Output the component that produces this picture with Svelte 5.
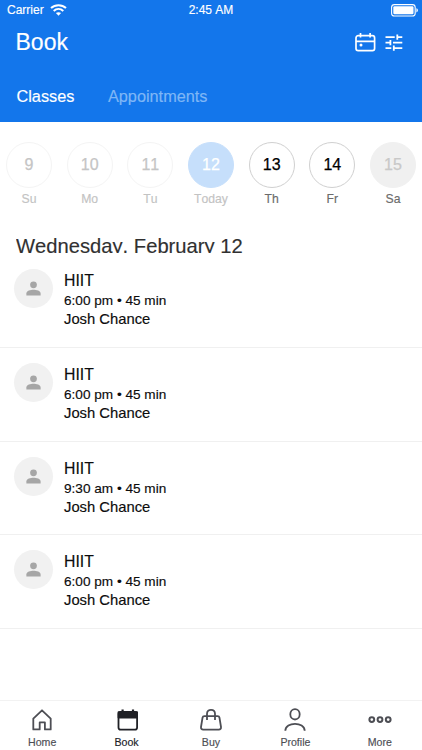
<script>
  const days = [
    { n: 9, label: 'Su', kind: 'past' },
    { n: 10, label: 'Mo', kind: 'past' },
    { n: 11, label: 'Tu', kind: 'past' },
    { n: 12, label: 'Today', kind: 'today' },
    { n: 13, label: 'Th', kind: 'open' },
    { n: 14, label: 'Fr', kind: 'open' },
    { n: 15, label: 'Sa', kind: 'closed' }
  ];
  const classes = [
    { name: 'HIIT', time: '6:00 pm • 45 min', coach: 'Josh Chance' },
    { name: 'HIIT', time: '6:00 pm • 45 min', coach: 'Josh Chance' },
    { name: 'HIIT', time: '9:30 am • 45 min', coach: 'Josh Chance' },
    { name: 'HIIT', time: '6:00 pm • 45 min', coach: 'Josh Chance' }
  ];
  const tabs = ['Home', 'Book', 'Buy', 'Profile', 'More'];
</script>

<div class="screen">
  <header>
    <div class="status">
      <div class="carrier">
        <span>Carrier</span>
        <svg width="17" height="12" viewBox="0 0 17 12" fill="none" stroke="#fff">
          <path d="M1 4.1C5.2.2 11.8.2 16 4.1" stroke-width="2" />
          <path d="M3.7 6.9c2.8-2.5 6.8-2.5 9.6 0" stroke-width="2" />
          <path d="M8.5 11.8 5.9 9.1c1.4-1.3 3.8-1.3 5.2 0z" fill="#fff" stroke="none" />
        </svg>
      </div>
      <span class="clock">2:45 AM</span>
      <svg class="battery" width="28" height="13" viewBox="0 0 28 13">
        <rect x=".6" y=".6" width="23.6" height="11.4" rx="2.8" fill="none" stroke="#fff" stroke-width="1.1" />
        <rect x="2.3" y="2.3" width="20.2" height="8" rx="1.2" fill="#fff" />
        <path d="M25.4 4.2c2 .7 2 3.5 0 4.2z" fill="#fff" />
      </svg>
    </div>
    <div class="title">
      <h1>Book</h1>
      <div class="actions">
        <svg width="21" height="19" viewBox="0 0 21 19" fill="none" stroke="#fff" stroke-width="1.7">
          <rect x="1" y="2.7" width="18.6" height="15" rx="2.2" />
          <path d="M1 8.3h18.6M5.5 0v4.6M15.1 0v4.6" />
          <circle cx="6" cy="12" r="1.5" fill="#fff" stroke="none" />
        </svg>
        <svg width="18" height="17" viewBox="0 0 18 17" fill="none" stroke="#fff" stroke-width="1.8">
          <path d="M.5 3.1h9.2M12.5 3.1h4.8M12.3.4v5.4M.5 8.6h4.8M8 8.6h9.3M5.4 5.9v5.4M.5 14.1h5.8M8.8 14.1h8.5M8.8 11.4v5.4" />
        </svg>
      </div>
    </div>
    <nav class="modes"><span>Classes</span><span class="idle">Appointments</span></nav>
  </header>

  <div class="week">
    {#each days as d}
      <div class="day {d.kind}">
        <div class="ring">{d.n}</div>
        <div class="label">{d.label}</div>
      </div>
    {/each}
  </div>

  <h2>Wednesday, February 12</h2>

  <main>
    {#each classes as c}
      <article>
        <div class="avatar">
          <svg width="15" height="15" viewBox="0 0 16 16" fill="#a6a6a6">
            <circle cx="8" cy="4" r="3.6" />
            <path d="M.4 15.4v-2c0-2.9 4.6-4 7.6-4s7.6 1.1 7.6 4v2z" />
          </svg>
        </div>
        <div class="info">
          <div class="name">{c.name}</div>
          <div class="time">{c.time}</div>
          <div class="coach">{c.coach}</div>
        </div>
      </article>
    {/each}
  </main>

  <footer>
    {#each tabs as t}
      <div class="tab" class:active={t === 'Book'}>
        <svg width="26" height="26" viewBox="0 0 26 26" fill="none" stroke="currentColor" stroke-width="1.8" stroke-linejoin="round">
          {#if t === 'Home'}
            <path d="M4.3 11.6 13 3.3l8.7 8.3v10.8h-5.8v-7h-5.2v7H4.3z" />
          {:else if t === 'Book'}
            <rect x="4.5" y="4.9" width="18.6" height="17.7" rx="2.2" />
            <path d="M4.5 5.2h18.6v5.4H4.5z" fill="currentColor" />
            <path d="M8.6 2.4V6M19 2.4V6" stroke-width="2.2" />
          {:else if t === 'Buy'}
            <path d="M6.4 9.2h13.2c1.1 0 1.7.6 1.9 1.6l1.5 9.2c.2 1.6-.7 2.6-2.2 2.6H5.2c-1.5 0-2.4-1-2.2-2.6l1.5-9.2c.2-1 .8-1.6 1.9-1.6z" />
            <path d="M9 13V6.7c0-5.2 8-5.2 8 0V13" />
          {:else if t === 'Profile'}
            <ellipse cx="13" cy="7.3" rx="4.7" ry="5.2" />
            <path d="M3.3 23.7c.2-9.2 19.2-9.2 19.4 0" />
          {:else}
            <circle cx="4.8" cy="12.6" r="2.4" stroke-width="2" />
            <circle cx="13" cy="12.6" r="2.4" stroke-width="2" />
            <circle cx="21.2" cy="12.6" r="2.4" stroke-width="2" />
          {/if}
        </svg>
        <span>{t}</span>
      </div>
    {/each}
  </footer>
</div>

<style>
  .screen {
    width: 422px;
    height: 750px;
    display: flex;
    flex-direction: column;
    overflow: hidden;
    background: #fff;
    color: #111;
    font-family: "Liberation Sans", Arial, sans-serif;
    font-kerning: none;
    -webkit-text-stroke: 0.15px;
  }
  header {
    height: 122px;
    flex: none;
    background: #1376eb;
    color: #fff;
  }
  .status {
    height: 20px;
    display: grid;
    grid-template-columns: 1fr auto 1fr;
    align-items: center;
    padding: 0 3px 0 7px;
    font-size: 12px;
    line-height: 19px;
  }
  .carrier {
    display: flex;
    align-items: center;
    gap: 6px;
  }
  .clock {
    margin-right: 4px;
  }
  .battery {
    justify-self: end;
  }
  .title {
    display: flex;
    justify-content: space-between;
    height: 46px;
    padding: 0 19px 0 15.5px;
  }
  h1 {
    margin: 8px 0 0;
    font-size: 23px;
    line-height: 28px;
    font-weight: 400;
  }
  .actions {
    display: flex;
    gap: 9px;
    align-items: center;
    height: 19px;
    margin-top: 13px;
  }
  .modes {
    display: flex;
    gap: 33.5px;
    padding: 20px 0 0 16.5px;
    font-size: 16.3px;
    line-height: 20px;
  }
  .idle {
    color: #7fb6f6;
  }
  .week {
    display: grid;
    grid-template-columns: repeat(7, 60.66px);
    flex: none;
    height: 113px;
    margin-left: -1.3px;
    padding-top: 19.5px;
    box-sizing: border-box;
  }
  .day {
    display: flex;
    flex-direction: column;
    align-items: center;
  }
  .ring {
    width: 46px;
    height: 46px;
    border: 1px solid #d0d0d0;
    border-radius: 50%;
    box-sizing: border-box;
    font-size: 16px;
    line-height: 44px;
    text-align: center;
    color: #000;
    -webkit-text-stroke: 0.25px;
  }
  .label {
    margin-top: 3px;
    font-size: 12.2px;
    line-height: 16px;
    color: #6b6b6b;
  }
  .past .ring {
    border-color: #f4f4f4;
    color: #c5c5c5;
  }
  .past .label,
  .today .label {
    color: #c3c3c3;
  }
  .today .ring {
    border-color: #c6dffb;
    background: #c6dffb;
    color: #fff;
  }
  .closed .ring {
    border-color: #f0f0f0;
    background: #f0f0f0;
    color: #c8c8c8;
  }
  h2 {
    flex: none;
    height: 18px;
    margin: 0 0 1px 16px;
    overflow: hidden;
    font-size: 20.2px;
    line-height: 23px;
    font-weight: 400;
    color: #303030;
  }
  main {
    flex: 1;
  }
  article {
    display: flex;
    gap: 11.2px;
    height: 93.75px;
    box-sizing: border-box;
    padding: 15px 0 0 13.8px;
    border-bottom: 1px solid #f0f0f0;
  }
  .avatar {
    width: 39px;
    height: 39px;
    border-radius: 50%;
    background: #f1f1f1;
    display: grid;
    place-items: center;
  }
  .info {
    padding-top: 2px;
    color: #0c0c0c;
  }
  .name {
    font-size: 15.8px;
    line-height: 20px;
  }
  .time {
    font-size: 13.6px;
    line-height: 19px;
  }
  .coach {
    font-size: 14.8px;
    line-height: 19px;
  }
  footer {
    flex: none;
    height: 50px;
    box-sizing: border-box;
    border-top: 1px solid #f2f2f2;
    display: grid;
    grid-template-columns: repeat(5, 1fr);
    background: #fff;
  }
  .tab {
    display: flex;
    flex-direction: column;
    align-items: center;
    padding-top: 6px;
    color: #4d4e54;
  }
  .tab span {
    margin-top: 2px;
    font-size: 10.6px;
    line-height: 14px;
  }
  .tab.active {
    color: #202126;
  }
</style>
